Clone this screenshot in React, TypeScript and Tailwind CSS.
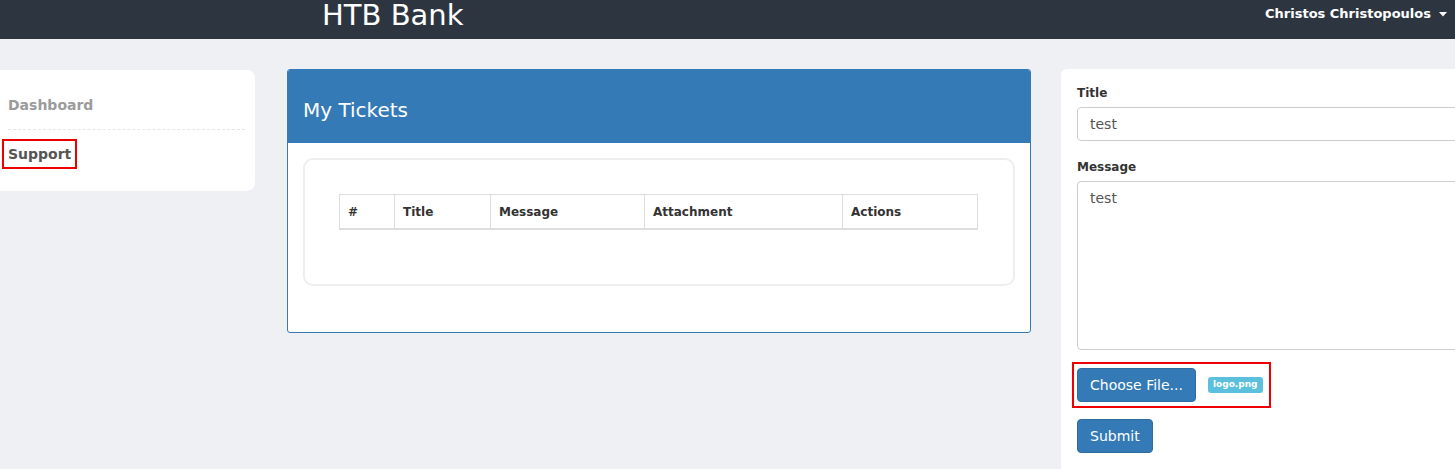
const columns = [
    { name: "#", width: "w-[54px]" },
    { name: "Title", width: "w-[96px]" },
    { name: "Message", width: "w-[154px]" },
    { name: "Attachment", width: "w-[198px]" },
    { name: "Actions", width: "flex-1" },
]

const Navbar = () => (
    <div className="h-[39px] bg-[#2d3640] flex items-start">
        <div className="pl-[322px] text-[29px] leading-[28px] text-white pt-[1px]">HTB Bank</div>
        <div className="ml-auto flex items-center gap-[6px] pr-[8px] pt-[6px] text-[13px] leading-[16px] font-bold text-white">
            Christos Christopoulos
            <svg width="8" height="5" viewBox="0 0 8 5" className="ml-[2px]">
                <path d="M0 0 L8 0 L4 4.5 Z" fill="#fff" />
            </svg>
        </div>
    </div>
)

const Sidebar = () => (
    <div className="w-[265px] shrink-0 -ml-[10px] mt-[1px] h-[121px] bg-white rounded-[8px] pl-[18px] pr-[10px] pt-[25px] text-[14px] font-bold">
        <div className="text-[#9b9b9b] pb-[13px] border-b border-dashed border-[#e6e6e6]">Dashboard</div>
        <div className="mt-[9px] -ml-[6px] inline-block border-2 border-[#e00] px-[4px] py-[3px] text-[#555] leading-[20px]">Support</div>
    </div>
)

const TicketsPanel = () => (
    <div className="w-[744px] shrink-0 h-[264px] border border-[#337ab7] rounded-[3px] bg-white overflow-hidden">
        <div className="h-[73px] bg-[#347ab7] flex items-center px-[15px] pt-[7px] text-[20px] text-white">My Tickets</div>
        <div className="p-[15px]">
            <div className="h-[128px] border-2 border-[#eee] rounded-[10px] pl-[34px] pr-[35px] pt-[34px]">
                <div className="flex border border-[#ddd] border-b-2 h-[36px] text-[12px] font-bold text-[#333]">
                    {columns.map((c, i) => (
                        <div key={c.name} className={`${c.width} flex items-center px-[8px] ${i > 0 ? "border-l border-[#ddd]" : ""}`}>{c.name}</div>
                    ))}
                </div>
            </div>
        </div>
    </div>
)

const TicketForm = () => (
    <div className="w-[420px] h-[420px] bg-white rounded-[6px] pl-[16px] pt-[16px] text-[#333]">
        <label className="block text-[12px] font-bold leading-[17px] mb-[5px]">Title</label>
        <div className="h-[34px] border border-[#ccc] rounded-[4px] flex items-center px-[12px] text-[14px] text-[#555]">test</div>
        <label className="block text-[12px] font-bold leading-[17px] mt-[18px] mb-[5px]">Message</label>
        <div className="h-[169px] border border-[#ccc] rounded-[4px] px-[12px] py-[6px] text-[14px] text-[#555]">test</div>
        <div className="mt-[12px] -ml-[5px] w-[199px] h-[46px] border-2 border-[#e00] flex items-center pl-[3px] gap-[12px]">
            <button className="h-[34px] px-[12px] bg-[#337ab7] border border-[#2e6da4] rounded-[4px] text-[14px] text-white">Choose File...</button>
            <span className="h-[16px] px-[5px] bg-[#5bc0de] rounded-[3px] text-[9px] font-bold text-white flex items-center">logo.png</span>
        </div>
        <button className="mt-[11px] h-[34px] px-[12px] bg-[#337ab7] border border-[#2e6da4] rounded-[4px] text-[14px] text-white">Submit</button>
    </div>
)

export default function App() {
    return (
        <div className="w-[1455px] h-[469px] overflow-hidden bg-[#eef0f4] font-['DejaVu_Sans',sans-serif]">
            <Navbar />
            <div className="flex items-start gap-[32px] pt-[30px]">
                <Sidebar />
                <TicketsPanel />
                <div className="-ml-[2px] shrink-0">
                    <TicketForm />
                </div>
            </div>
        </div>
    )
}
